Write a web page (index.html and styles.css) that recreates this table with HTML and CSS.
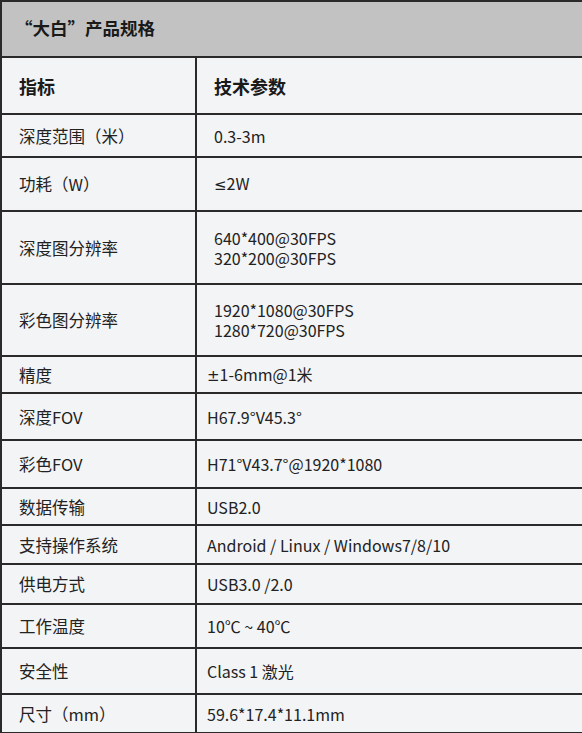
FILE: index.html
```html
<!DOCTYPE html>
<html lang="zh">
<head>
<meta charset="utf-8">
<title>“大白”产品规格</title>
<link rel="stylesheet" href="styles.css">
</head>
<body>
<table class="spec">
  <colgroup>
    <col class="col-key">
    <col class="col-val">
  </colgroup>
  <thead>
    <tr class="title-row"><th colspan="2" class="title">“大白”产品规格</th></tr>
  </thead>
  <tbody>
    <tr class="r57 head"><td class="key">指标</td><td class="val indent">技术参数</td></tr>
    <tr class="r43"><td class="key">深度范围（米）</td><td class="val indent">0.3-3m</td></tr>
    <tr class="r54"><td class="key">功耗（W）</td><td class="val indent"><span class="sym">≤</span>2W</td></tr>
    <tr class="r73"><td class="key">深度图分辨率</td><td class="val indent">640*400@30FPS<br>320*200@30FPS</td></tr>
    <tr class="r72"><td class="key">彩色图分辨率</td><td class="val indent">1920*1080@30FPS<br>1280*720@30FPS</td></tr>
    <tr class="r37"><td class="key">精度</td><td class="val"><span class="sym">±</span>1-6mm@1米</td></tr>
    <tr class="r47"><td class="key">深度FOV</td><td class="val">H67.9°V45.3°</td></tr>
    <tr class="r48"><td class="key">彩色FOV</td><td class="val">H71°V43.7°@1920*1080</td></tr>
    <tr class="r37"><td class="key">数据传输</td><td class="val">USB2.0</td></tr>
    <tr class="r39"><td class="key">支持操作系统</td><td class="val">Android / Linux / Windows7/8/10</td></tr>
    <tr class="r40"><td class="key">供电方式</td><td class="val">USB3.0 /2.0</td></tr>
    <tr class="r44"><td class="key">工作温度</td><td class="val">10℃ ~ 40℃</td></tr>
    <tr class="r46"><td class="key">安全性</td><td class="val">Class 1 激光</td></tr>
    <tr class="r39"><td class="key">尺寸（mm）</td><td class="val">59.6*17.4*11.1mm</td></tr>
  </tbody>
</table>
</body>
</html>
```
FILE: styles.css
```css
html, body {
  margin: 0;
  padding: 0;
  background: #f3f4f6;
}
.spec {
  width: 582px;
  border-collapse: collapse;
  table-layout: fixed;
  font-family: "Noto Sans CJK SC", "Noto Sans", sans-serif;
  color: #222;
  background: #f3f4f6;
}
.col-key { width: 195px; }
.col-val { width: 387px; }
.spec th, .spec td {
  border: 2px solid #2a2a2a;
  padding: 0 0 0 17px;
  vertical-align: middle;
  text-align: left;
}
.title-row { height: 56px; }
.spec .title {
  background: #c2c2c2;
  font-size: 17.5px;
  font-weight: 700;
  color: #1a1a1a;
  padding-left: 13px;
  padding-bottom: 3px;
}
.spec .key { font-size: 16.5px; }
.spec .val { font-size: 16px; padding-left: 10px; line-height: 20px; }
.spec .val.indent { padding-left: 17px; }
.spec .head td { font-size: 18px; font-weight: 700; color: #1a1a1a; }
.sym { font-family: "DejaVu Sans", sans-serif; font-size: 15px; }
.r37 { height: 37px; }
.r39 { height: 39px; }
.r40 { height: 40px; }
.r43 { height: 43px; }
.r44 { height: 44px; }
.r46 { height: 46px; }
.r47 { height: 47px; }
.r48 { height: 48px; }
.r54 { height: 54px; }
.r57 { height: 57px; }
.r72 { height: 72px; }
.r73 { height: 73px; }
```
